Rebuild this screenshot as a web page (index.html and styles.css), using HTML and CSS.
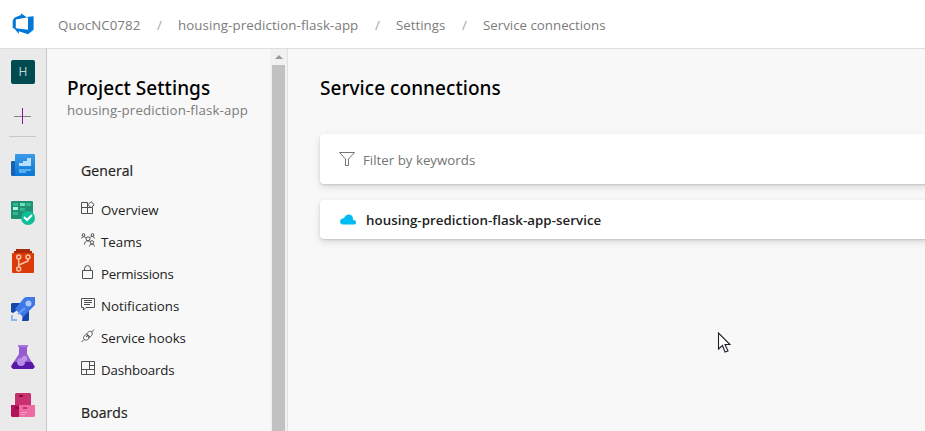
FILE: index.html
```html
<!DOCTYPE html>
<html lang="en">
<head>
<meta charset="utf-8">
<title>Service connections</title>
<link rel="stylesheet" href="styles.css">
</head>
<body>
<header class="topbar">
  <svg class="logo" width="22" height="22" viewBox="0 0 22 22"><path fill="#0078d7" fill-rule="evenodd" d="M.7 7.3 2.8 4.6 9 2.1V.2l5.2 3.7L21.6 3.2V16.7L16 21.2 6.8 18.2v2.8L2.5 15.7.7 15zM3.8 6.5v8.8L16 16.8V4.2z"/></svg>
  <nav class="crumbs">
    <span class="crumb c-org">QuocNC0782</span><span class="slash">/</span>
    <span class="crumb c-project">housing-prediction-flask-app</span><span class="slash">/</span>
    <span class="crumb c-settings">Settings</span><span class="slash">/</span>
    <span class="crumb c-page">Service connections</span>
  </nav>
</header>
<div class="shell">
  <aside class="rail">
    <div class="avatar">H</div>
    <svg class="plus" width="18" height="18" viewBox="0 0 18 18"><path d="M1 9.5h17" stroke="#85808a"/><path d="M9.5 1v16" stroke="#881798"/></svg>
    <div class="rule"></div>
    <div class="hubs">
      <svg width="24" height="24" viewBox="0 0 24 24"><defs><linearGradient id="b" x2="0" y2="1"><stop stop-color="#3c9be8"/><stop offset="1" stop-color="#0877d5"/></linearGradient></defs><path fill="#1265b4" d="M0 8.5 1 8h4v15H1l-1-1z"/><rect x="4" y="1" width="20" height="22" rx="1" fill="url(#b)"/><path fill="#b9e1ff" d="M8 13V10h4V8h4V5h4v8z"/><path fill="#58aeef" d="M8 16h12v2h-5v2H8z"/></svg>
      <svg width="24" height="24" viewBox="0 0 24 24"><rect x="0" y="0" width="22" height="18" rx="1" fill="#218f72"/><path fill="#2eb990" d="M2 2h5v3H2zM15 2h5v3h-5zM9 7h5v3H9zM2 11h5v3H2z"/><path fill="#69e1c3" d="M9 2h5v3H9z"/><path fill="#b3f5e0" d="M2 6h5v3H2z"/><circle cx="17" cy="17" r="7" fill="#12bd9b"/><path d="m13 16 3 3 5-5" fill="none" stroke="#fff" stroke-width="2"/></svg>
      <svg width="24" height="24" viewBox="0 0 24 24"><path fill="#a92b09" d="M5 0h14v2h2v3H3V2h2z"/><rect x="1" y="4" width="22" height="20" rx="1" fill="#db3c07"/><g fill="none" stroke="#ffc1a8" stroke-width="1.5"><circle cx="7.7" cy="8" r="2"/><circle cx="17" cy="8" r="2"/><circle cx="7.7" cy="20" r="2"/><path d="M7.7 10v8M17 10v2l-9 4"/></g></svg>
      <svg width="24" height="24" viewBox="0 0 24 24"><path fill="#1645ac" d="M0 7 1 6h10L8 12 2 16l-2-1zM12 17l6-5v11l-1 1h-6z"/><path fill="#3d78e6" d="M13 1 15 0h9v8L12 20 4 12z"/><path d="m7 17 7-6" stroke="#6a9df4" stroke-width="2"/><circle cx="17.5" cy="6.5" r="3" fill="#a9c6ff"/><path fill="#8cb5f7" d="M0 18h2v4h4v2H0z"/></svg>
      <svg width="24" height="24" viewBox="0 0 24 24"><path fill="#955bd0" d="M8 2h8v7l7 12-2 3H3l-3-3L8 9z"/><path fill="#a974dc" d="M7 0h10v2H7z"/><path fill="#5a18a6" d="M3 17h18l3 5-2 2H2l-2-2z"/><circle cx="10" cy="17" r="4" fill="#b58be5"/><circle cx="13.5" cy="13.5" r="2.7" fill="#bd94e8"/></svg>
      <svg width="24" height="24" viewBox="0 0 24 24"><path fill="#c8306f" d="M4 1 5 0h14l1 1v12H4z"/><path fill="#b3155b" d="M0 12h9v12H1l-1-1z"/><path fill="#ed6ba1" d="M8 12h16v11l-1 1H8z"/><path fill="#890b3d" d="M8 2h4v2H8zM4 14h4v2H4z"/><path fill="#c8326f" d="M12 14h4v2h-4z"/><path fill="#f59cc0" d="M10 19h6v1h-6zM10 21h4v1h-4z"/></svg>
    </div>
  </aside>
  <section class="sidebar">
    <div class="side-content">
      <h2>Project Settings</h2>
      <p class="subtitle">housing-prediction-flask-app</p>
      <h3 class="g-general">General</h3>
      <ul>
        <li><svg viewBox="0 0 14 14"><path d="M.5 1.5h6v5h-6zM.5 6.5h6v6h-6zM6.5 6.5h5v6h-5M10 .7l3.2 3L10 6.8 7 3.7z"/></svg><span>Overview</span></li>
        <li><svg viewBox="0 0 14 14"><circle cx="2.5" cy="2" r="1.4"/><circle cx="11.5" cy="2" r="1.4"/><circle cx="7" cy="5.8" r="2"/><circle cx="11" cy="9.4" r="1.7"/><path d="M.5 5.5C.8 3.3 4.2 3.3 4.8 4.8M9.2 4.5c.5-1.7 4-1.3 4.3 1M3.5 11.5C3.5 9 5 7.8 7 7.8c1.2 0 2 .5 2.5 1M8.3 13.5c.3-3.2 5-3.2 5.2 0"/></svg><span>Teams</span></li>
        <li><svg viewBox="0 0 14 14"><path d="M1.5 5.5h10v8h-10zM3.5 5.5V4a3 3.5 0 0 1 6 0v1.5"/></svg><span class="permissions">Permissions</span></li>
        <li><svg viewBox="0 0 14 14"><path d="M.5 1.5h13v9H5L2.5 13v-2.5h-2zM3 3.5h8M3 5.5h8M3 7.5h6"/></svg><span>Notifications</span></li>
        <li><svg viewBox="0 0 14 14"><path d="m.5 13 2.6-2.6M10.5 3 13 .5M3.2 10.4C1.5 8.5 3.2 7 5 5.3l3.5 3.6c-1.6 1.8-3.6 3.1-5.3 1.5zM5.7 4.6C7.5 2.7 9 1.4 10.6 3c1.7 1.8 0 3.5-1.5 5.1zM5 8l1.5-1.5M7 9l1.5-1.5"/></svg><span>Service hooks</span></li>
        <li><svg viewBox="0 0 14 14"><path d="M.5.5h13v13H.5zM8.5.5v8M.5 8.5h8M8.5 4.5h5M5.5 8.5h8M5.5 8.5v5"/></svg><span class="dashboards">Dashboards</span></li>
      </ul>
      <h3 class="g-boards">Boards</h3>
    </div>
    <div class="scrollbar"><div class="arrow"></div><div class="thumb"></div></div>
  </section>
  <main>
    <h1>Service connections</h1>
    <div class="card filter"><svg width="16" height="16" viewBox="0 0 16 16"><path fill="none" stroke="#777" d="M.5 1.5h15L9.5 8v6.5h-3V8z"/></svg><span>Filter by keywords</span></div>
    <div class="card connection"><svg width="16" height="11" viewBox="0 0 16 11"><path fill="#00bcf2" d="M3 10.5C-.5 10.5-.8 6 2 4.7c.8-.5 1.3-.5 2-.4C5.3-.2 11.7-1 13 4v2c4 .1 4 4.5 1 4.5z"/></svg><span>housing-prediction-flask-app-service</span></div>
  </main>
</div>
<svg class="pointer" width="14" height="21" viewBox="0 0 14 21"><path d="M1.5 1v16l4-3.5L8 20l3-1-3-6.5h5z" fill="#fff" stroke="#20202c" stroke-width="1.1"/></svg>
</body>
</html>
```
FILE: styles.css
```css
* { box-sizing: border-box; }
html, body { margin: 0; height: 100%; overflow: hidden; }
body { font: 13.3px/20px "Open Sans", sans-serif; color: #222; background: #f8f8f8; }
h1, h2, h3, p, ul { margin: 0; padding: 0; }
svg { display: block; flex: none; }

.topbar { height: 49px; display: flex; align-items: center; background: #fff; border-bottom: 1px solid #dedede; padding-left: 12px; }
.crumbs { display: flex; margin-left: 24px; padding-top: 2px; color: #7c7c7c; white-space: nowrap; }
.crumb { flex: none; }
.c-org { width: 83px; letter-spacing: .07px; }
.c-project { width: 181px; letter-spacing: .1px; }
.c-settings { width: 50px; }
.slash { width: 37px; text-align: center; color: #a6a6a6; }

.shell { display: flex; height: 382px; }
.rail { width: 47px; flex: none; background: #eaeaea; border-right: 1px solid #c8c8c8; padding: 11px 0 0 11px; }
.avatar { width: 24px; height: 24px; border-radius: 2px; background: #004b50; color: #c0d4d5; font-size: 12px; line-height: 24px; text-align: center; }
.plus { margin: 23px 0 0 2px; }
.rule { width: 27px; height: 1px; margin: 11px 0 0 -2px; background: #c8c8c8; }
.hubs { display: grid; gap: 24px; margin-top: 16px; }

.sidebar { width: 241px; flex: none; display: flex; border-right: 1px solid #e1e1e1; }
.side-content { width: 223px; padding: 26px 0 0 20px; white-space: nowrap; }
h1, h2 { font-family: "Noto Sans", "Open Sans", sans-serif; font-size: 19px; line-height: 26px; font-weight: 500; color: #000; letter-spacing: .05px; }
.subtitle { color: #7c7c7c; line-height: 20px; letter-spacing: .12px; margin-top: -1px; }
h3 { margin-left: 14px; font-size: 14px; line-height: 20px; font-weight: 500; color: #222; letter-spacing: .1px; -webkit-text-stroke: .2px #222; }
.g-general { margin-top: 41px; }
ul { list-style: none; margin: 13px 0 0 14px; }
li { height: 32px; display: flex; align-items: center; gap: 6px; }
li svg { width: 14px; height: 14px; margin-bottom: 4px; fill: none; stroke: #505050; }
.permissions { letter-spacing: -.22px; }
.dashboards { letter-spacing: -.15px; }
.g-boards { margin-top: 17px; }
.scrollbar { width: 17px; display: flex; flex-direction: column; align-items: center; background: #f1f1f1; padding-top: 6px; }
.arrow { border: 4px solid transparent; border-top: 0; border-bottom: 4px solid #999; }
.thumb { width: 13px; flex: 1; margin-top: 6px; background: #c1c1c1; }

main { flex: 1; padding: 26px 0 0 32px; white-space: nowrap; }
.card { display: flex; align-items: center; background: #fff; border-radius: 4px 0 0 4px; box-shadow: 0 3px 7px rgba(0,0,0,.13), 0 1px 2px rgba(0,0,0,.12); margin-right: -12px; }
.filter { height: 50px; margin-top: 33px; padding: 0 0 0 19px; gap: 8px; color: #757575; }
.filter span { padding-top: 1px; }
.connection { height: 39px; margin-top: 16px; padding-left: 20px; gap: 10px; color: #222; font-weight: 600; letter-spacing: .05px; }
.pointer { position: absolute; left: 717px; top: 332px; }
```
